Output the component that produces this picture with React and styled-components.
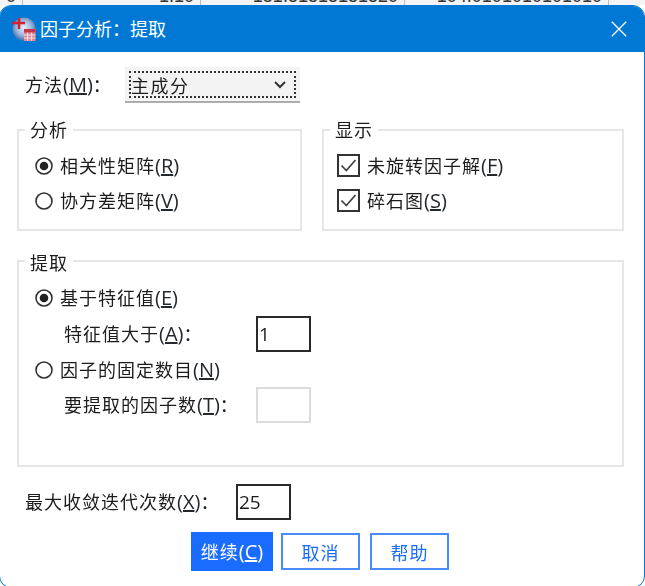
import React from "react";
import styled, { createGlobalStyle } from "styled-components";

const Global = createGlobalStyle`
  html, body { margin: 0; padding: 0; background: #fff; }
  * { box-sizing: border-box; }
`;

const Page = styled.div`
  width: 645px; height: 586px; display: flex; flex-direction: column; overflow: hidden;
  font-family: "Open Sans", "Noto Sans CJK SC", sans-serif; font-size: 18px; color: #1c1c1c;
  filter: blur(0.3px);
`;
const Strip = styled.div`
  height: 5px; flex: none; overflow: hidden; display: grid;
  grid-template-columns: 23px 178px 204px 204px 36px; background: #f4f4f4;
`;
const StripCell = styled.div`
  height: 5px; border-right: 1px solid #bbb; text-align: right; padding-right: 6px;
  font-family: "Liberation Sans", sans-serif; font-size: 18px; line-height: 5px; white-space: nowrap; color: #333;
  & > span { display: block; margin-top: -6px; }
`;
const Dialog = styled.div`
  flex: none; width: 646px; height: 583px; margin-left: -1px; display: flex; flex-direction: column; background: #fff;
  border: 1px solid #0078d4;
  border-radius: 12px; overflow: hidden;
`;
const TitleBar = styled.div`
  height: 46px; flex: none; background: #0078d4; color: #fff; display: flex; align-items: center;
  padding: 0 17px 0 11px; gap: 4px; font-size: 18px;
`;
const TitleText = styled.div` flex: 1; line-height: 24px; `;
const Body = styled.div` flex: 1; display: flex; flex-direction: column; padding: 0 20px 0 17px; `;
const MethodRow = styled.div` display: flex; align-items: center; height: 36px; margin-top: 15px; padding-left: 8px; `;
const Label = styled.span` white-space: nowrap; line-height: 24px; letter-spacing: 1px; `;
const MnemonicText = styled.span` font-size: 20px; letter-spacing: 0; color: #23282e; `;
const MethodLabel = styled(Label)` width: 100px; flex: none; `;
const Select = styled.div`
  width: 175px; height: 36px; background: #f3f3f3; border-bottom: 2px solid #adadad; padding: 4px;
`;
const SelectInner = styled.div`
  height: 27px; border: 2px dotted #333; display: flex; align-items: center; justify-content: space-between;
  padding: 0 8px 0 0; letter-spacing: 1.5px;
`;
const Groups = styled.div` display: flex; gap: 20px; margin-top: 15px; `;
const Group = styled.fieldset`
  margin: ${p => p.$mt || 0}px 0 0; padding: 0; border: 2px solid #e6e6e6; min-width: 0;
  width: ${p => p.$w}px; height: ${p => p.$h}px; display: block;
`;
const Legend = styled.legend`
  margin-left: 6px; padding: ${p => p.$pt || 0}px 5px 0; line-height: 24px; letter-spacing: 1px;
`;
const List = styled.div` display: flex; flex-direction: column; padding: ${p => p.$pt}px 0 0 ${p => p.$pl}px; `;
const OptionRow = styled.div` height: ${p => p.$h || 35}px; display: flex; align-items: center; gap: 7px; `;
const SubRow = styled.div`
  height: 36px; display: grid; grid-template-columns: 192px 55px; align-items: center; padding-left: 29px;
`;
const NumberBox = styled.div`
  width: 55px; height: 36px; border: 2px solid ${p => (p.$off ? "#dcdcdc" : "#2a2a2a")};
  font-size: 19px; line-height: 32px; padding-left: 1px; background: #fff;
`;
const IterRow = styled.div` display: flex; align-items: center; height: 36px; margin-top: 17px; padding-left: 8px; `;
const IterLabel = styled(Label)` width: 211px; flex: none; `;
const Buttons = styled.div` display: flex; align-items: center; margin-top: 12px; padding-left: 174px; `;
const Button = styled.div`
  width: ${p => p.$w}px; height: ${p => (p.$primary ? 39 : 37)}px; margin-right: ${p => p.$mr}px;
  display: flex; align-items: center; justify-content: center;
  background: ${p => (p.$primary ? "#1a6cff" : "#fff")}; color: ${p => (p.$primary ? "#fff" : "#1a6cff")};
  border: 2px solid ${p => (p.$primary ? "#1a6cff" : "#4a8bff")}; letter-spacing: 1px;
  & ${MnemonicText} { color: inherit; }
`;
const Mark = styled.svg` flex: none; display: block; `;

const Mn = ({ k }) => <MnemonicText>(<u>{k}</u>)</MnemonicText>;

const Radio = ({ on }) => (
  <Mark width="18" height="18" viewBox="0 0 18 18">
    <circle cx="9" cy="9" r="8" fill="#fff" stroke="#333" strokeWidth="1.6" />
    {on && <circle cx="9" cy="9" r="4.3" fill="#222" />}
  </Mark>
);
const Check = () => (
  <Mark width="23" height="23" viewBox="0 0 23 23">
    <rect x="1" y="1" width="21" height="21" fill="#fff" stroke="#333" strokeWidth="2" />
    <path d="M4.5 11.5 L9.3 16.5 L18.5 6" fill="none" stroke="#444" strokeWidth="1.8" />
  </Mark>
);
const AppIcon = () => (
  <Mark width="25" height="26" viewBox="0 0 25 26">
    <defs>
      <radialGradient id="g" cx="50%" cy="45%" r="55%">
        <stop offset="0%" stopColor="#e8f0fa" />
        <stop offset="60%" stopColor="#9ab6dc" />
        <stop offset="100%" stopColor="#4a72ad" />
      </radialGradient>
    </defs>
    <circle cx="13" cy="13" r="11.5" fill="url(#g)" />
    <path d="M8 2 V13 M1 7 H14" stroke="#d42035" strokeWidth="2.4" />
    <rect x="13" y="13" width="11.5" height="12" fill="#e28a9a" />
    <rect x="13" y="13" width="11.5" height="3.5" fill="#c8324c" />
    <path d="M13 19 H24.5 M13 22 H24.5 M16.5 16.5 V25 M20.5 16.5 V25" stroke="#fbe6ea" strokeWidth="0.9" />
  </Mark>
);

export default function App() {
  return (
    <Page>
      <Global />
      <Strip>
        <StripCell><span>0</span></StripCell>
        <StripCell><span>1.10</span></StripCell>
        <StripCell><span>151.51515151520</span></StripCell>
        <StripCell><span>104.0101010101010</span></StripCell>
        <div />
      </Strip>
      <Dialog>
        <TitleBar>
          <AppIcon />
          <TitleText>因子分析：提取</TitleText>
          <svg width="16" height="16" viewBox="0 0 16 16">
            <path d="M0.8 0.8 L15.2 15.2 M15.2 0.8 L0.8 15.2" stroke="#fff" strokeWidth="1.3" fill="none" />
          </svg>
        </TitleBar>
        <Body>
          <MethodRow>
            <MethodLabel>方法<Mn k="M" />：</MethodLabel>
            <Select>
              <SelectInner>
                主成分
                <svg width="12" height="8" viewBox="0 0 12 8">
                  <path d="M1 1 L6 6 L11 1" fill="none" stroke="#333" strokeWidth="2" />
                </svg>
              </SelectInner>
            </Select>
          </MethodRow>
          <Groups>
            <Group $w={285} $h={113}>
              <Legend>分析</Legend>
              <List $pt={6} $pl={16}>
                <OptionRow><Radio on /><Label>相关性矩阵<Mn k="R" /></Label></OptionRow>
                <OptionRow><Radio /><Label>协方差矩阵<Mn k="V" /></Label></OptionRow>
              </List>
            </Group>
            <Group $w={302} $h={113}>
              <Legend>显示</Legend>
              <List $pt={6} $pl={13}>
                <OptionRow><Check /><Label>未旋转因子解<Mn k="F" /></Label></OptionRow>
                <OptionRow><Check /><Label>碎石图<Mn k="S" /></Label></OptionRow>
              </List>
            </Group>
          </Groups>
          <Group $w={607} $h={220} $mt={16}>
            <Legend $pt={4}>提取</Legend>
            <List $pt={4} $pl={16}>
              <OptionRow $h={37}><Radio on /><Label>基于特征值<Mn k="E" /></Label></OptionRow>
              <SubRow><Label>特征值大于<Mn k="A" />：</Label><NumberBox>1</NumberBox></SubRow>
              <OptionRow><Radio /><Label>因子的固定数目<Mn k="N" /></Label></OptionRow>
              <SubRow><Label>要提取的因子数<Mn k="T" />：</Label><NumberBox $off /></SubRow>
            </List>
          </Group>
          <IterRow>
            <IterLabel>最大收敛迭代次数<Mn k="X" />：</IterLabel>
            <NumberBox>25</NumberBox>
          </IterRow>
          <Buttons>
            <Button $primary $w={82} $mr={8}><span>继续<Mn k="C" /></span></Button>
            <Button $w={79} $mr={10}>取消</Button>
            <Button $w={79} $mr={0}>帮助</Button>
          </Buttons>
        </Body>
      </Dialog>
    </Page>
  );
}
